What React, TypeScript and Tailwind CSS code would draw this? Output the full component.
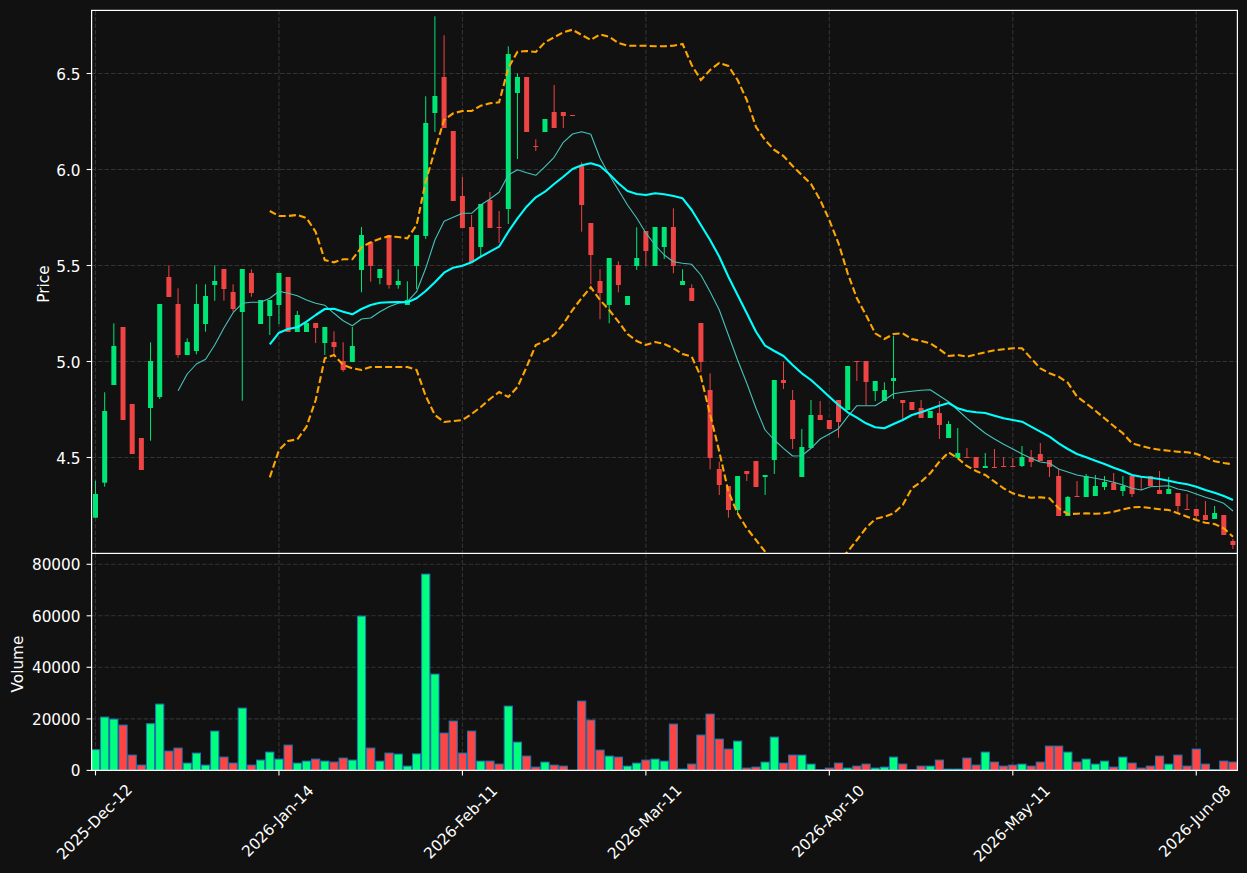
const X0 = 95.5;
const STEP = 9.173;
const xAt = (i: number) => X0 + i * STEP;
const L = 91.6;
const R = 1237.4;
const T = 10.4;
const MID = 553.4;
const B = 770.4;

const GREEN = "#00e676";
const RED = "#ef4444";

// dir, bodyTop, bodyBottom, wickTop, wickBottom (pixel rows of the plotted values)
type Candle = [number, number, number, number, number];
const candles: Candle[] = [
  [1,494,517.7,480.7,517.7],[1,411,482.7,392.3,486.7],[1,346,385,323.3,385],[0,327,420,327,420],[0,404,454,404,454],
  [0,438,470,438,470],[1,361,408,342.3,440.7],[1,304,397,304,399],[0,277,297,265.3,297],[0,304,355,288.3,357.7],
  [1,342,355,338.3,355],[1,304,351,284.3,354.3],[1,296,324,284.3,331.7],[1,281,285,265.3,300.7],[0,269,289,269,300.7],
  [0,292,309,284.3,311.7],[1,269,312,269,400.7],[0,273,293,269.3,296.7],[1,300,324,300,324],[1,300,316,300,335],
  [1,273,305,273,324],[0,277,332,277,332],[1,315,332,311,332],[1,323,332,323,332],[0,323,328,323,343],
  [1,327,343,327,355],[0,342,347,331.3,355],[0,361,370,342.3,371.7],[1,346,362,327,362],[1,235,270,227,292.3],
  [0,242,266,242,281.7],[1,269,278,269,284.3],[0,235,285,235,288.7],[1,281,285,269.3,288.7],[1,300,305,281.3,305],
  [1,235,266,235,289],[1,123,236,96.3,239],[1,96,113,16.3,132],[0,77,128,35.3,128],[0,131,201,131,201],
  [0,196,228,177,228],[0,227,262,215,262],[1,204,247,204,257],[0,200,228,192,228],[0,227,228,211,243],
  [1,54,209,46.3,224],[1,77,93,73.3,159],[0,77,132,77,132],[0,146,147,139.3,151],[1,119,132,119,132],
  [0,112,128,85,128],[0,112,116,112,128],[0,115,116,115,116],[0,166,205,162.3,231.7],[0,223,255,223,284.3],
  [0,281,293,269.3,319.3],[1,258,305,258,323.3],[0,265,285,261.3,292.3],[1,296,305,296,305],[1,258,266,227.3,270],
  [0,231,251,231,266],[1,227,266,227,266],[1,227,247,227,259],[0,227,266,208.3,273.3],[1,281,285,269.3,285],
  [0,288,301,284.3,301],[0,323,362,323,372],[0,390,458,373.3,469.3],[0,469,485,461.7,495],[0,486,510,486,517.7],
  [1,476,510,476,513],[0,471,474,471,481],[0,461,487,461,487],[1,475,477,475,495],[1,380,460,380,474],
  [0,380,383,361.7,389],[0,400,439,390,449],[1,447,477,429,477],[1,415,448,400,448],[0,415,420,401,420],
  [0,420,429,420,429],[0,400,422,400,437.7],[1,366,410,366,410],[0,361,362,361,381],[0,361,382,361,405],
  [1,381,391,381,401],[1,390,401,382.3,401],[1,378,381,336,399],[0,400,403,400,420],[0,402,410,402,410],
  [0,408,418,400,418],[1,411,418,411,418],[0,413,425,401,439],[1,424,438,421,438],[1,453,458,428,458],
  [0,457,458,448,458],[0,457,468,457,468],[1,466,468,453,468],[0,467,468,449,468],[0,466,467,457,467],
  [0,466,467,458,467],[1,457,466,446,467],[0,457,462,450,467],[0,454,461,443,461],[0,460,467,460,477],
  [0,476,516,469,516],[1,497,516,496,516],[0,496,497,481,497],[1,476,497,474,497],[1,486,496,475,496],
  [1,482,487,476,490],[0,483,490,473,490],[1,486,491,476,496],[0,476,494,476,497],[0,476,477,476,490],
  [0,476,486,476,486],[0,490,494,471,494],[1,489,494,477,494],[0,493,506,493,513],[0,509,510,494,510],
  [0,509,516,509,520],[0,515,520,501,520],[1,513,519,506,519],[0,515,535,515,535],[0,541,545,539,549],
];

const volumes = [
  20.7,53.3,51.3,45.3,15.3,5.3,46.7,66.3,19.3,22.3,7.3,17.3,5.3,39.3,13.3,7.3,62.3,5.3,10.3,18.3,
  11.3,25.3,7.3,9.3,11.3,9.3,8.3,12.3,10.3,154.3,22.3,9.3,17.3,16.3,4.3,16.5,196.3,96.3,37.3,49.3,
  17.3,39.3,9.3,9.3,6.3,64.3,28.3,14.3,3.3,8.3,5.3,4.3,0,69.3,50.3,20.3,14.3,13.3,4.3,7.3,
  10.3,11.3,9.3,46.3,1.3,6.3,35.3,56.3,31.3,21.3,29.3,2.3,3.3,8.3,33.3,7.3,15.3,15.3,6.3,0.7,
  2.3,7.3,2.3,4.3,6.3,2.3,3.3,13.3,6.3,0.7,4.3,4.3,10.3,1.3,1.3,12.3,5.3,18.3,8.3,4.3,
  5.3,6.3,4.3,8.3,24.3,24.3,18.3,8.3,11.3,6.3,9.3,3.3,13.3,7.3,2.3,4.3,14.3,6.3,15.3,4.3,
  21.3,6.3,0.7,9.3,8.3,
];

const teal = [
  390.7,374,364,359.3,345,328,312.7,303.3,302.3,302.3,298.3,291.3,293.3,295.7,300,303.3,305.3,313.3,320.7,325.7,
  319,318,311.7,306.7,303.3,301.7,291.7,268.3,240,221.3,217.3,213.3,213.3,205,199,192.3,175,169.7,172.7,175.3,
  166.7,157.3,142.3,134,131.7,134.3,158,175,190,205,218,233,245,255,261.7,263.3,264.3,275,291.7,310,
  335,360,383.3,408.3,430,440,448.3,456,455.7,448.3,439,434,428.7,416.7,405.7,405.7,405.7,400,393.7,392.3,
  391.3,390.3,389.7,395.7,401.7,410,418.3,426,433.3,439,444.3,449,454,458.3,462,463.3,469,472,475,476.7,
  478.3,480,482.3,485,488.3,490,486.7,486.3,485.7,489,490.7,494,497.3,500,503.3,511,
];
const cyan = [
  344.3,332.7,329,327.3,321.7,315,309,308.7,311.7,314.3,309,305,302.7,302.3,302,302.3,298.3,291,282.3,272.7,
  267.7,265.7,262.3,256.7,251.7,246.7,231.7,218.3,206.7,197.3,191.7,184,176.7,169,165.3,163.3,166,174,183.3,191,
  194,195,193.3,194.3,196,198.3,210,225,240,256.7,276.7,295,313.3,331.7,345.7,351,356,365,373.3,380,
  388.3,396.7,405,412.3,417.7,423.3,427.3,428.3,424,420,415,412.3,409,405.7,403,408.3,411,412.3,413,415.7,
  418.3,420,421.7,426.7,431.7,436.7,443.3,449,454,457.3,460.7,464,467.7,471,475,476.7,477.7,479,480.7,482.7,
  484.3,486.7,490,492.7,496,500,
];
const upper = [
  211,216,216,215,218,232,260,262.3,259.3,259.3,247.3,242.3,238.7,236.3,237,238.3,225,181.7,150,120,
  113.3,111,111,105.7,103.3,102.3,68,51.7,51,52,42.3,37.3,32.3,29.7,35,40,34.3,36.7,43,45.7,
  45.7,45.7,46.3,46.3,45.7,44,65,80,70,63,66,80,100,127,140,150,156,166,175,184,
  200,220,243.3,273.3,298.3,315,333.3,339,334,333.3,339,341,343.3,349.3,356,355,356.7,354.3,352.3,350.3,
  349.3,348.3,348.3,358.3,368.3,373.3,376.7,382.7,396.7,403.3,410.7,418.3,426,433.3,443.3,446,448.3,449.7,450.7,451.7,
  452.3,453.7,457.3,461.3,463,464.3,
];
const lower = [
  477.3,450,441,439.3,426.7,400,358.3,355,365,368.3,370,367,367,367,367,367,370,396,415,422,421,
  420,414,407,399,392,397,387,367,345,341,335,324,310,298,287.3,300,310,321.7,334,341,
  345,342,344,348.3,354,356.7,376.7,414.3,451.7,491.7,513.3,528.3,540,551.7,562,572,580,586,588,584,
  575,560,551.7,540,528,519,516.7,513.3,505,488.3,481.7,473.3,461.7,452.3,458.3,466,471,475,481.7,488.3,
  493.3,496,497.7,497.3,498.3,508.3,514,513.7,513.3,513.7,513.3,511.7,509.3,507.3,507,508,509.3,510,513.3,516.7,
  520,522.7,524,528.3,536.7,
];

const pts = (ys: number[], start: number) =>
  ys.map((y, k) => `${xAt(start + k).toFixed(1)},${y}`).join(" ");

const xTicks = [
  { i: 0, label: "2025-Dec-12", cx: 94.2, cy: 821.7 },
  { i: 20, label: "2026-Jan-14", cx: 277.5, cy: 820.8 },
  { i: 40, label: "2026-Feb-11", cx: 460.5, cy: 821.7 },
  { i: 60, label: "2026-Mar-11", cx: 644.5, cy: 821.7 },
  { i: 80, label: "2026-Apr-10", cx: 828, cy: 821 },
  { i: 100, label: "2026-May-11", cx: 1011.7, cy: 823.3 },
  { i: 120, label: "2026-Jun-08", cx: 1194.5, cy: 820.8 },
];
const priceTicks = [
  { y: 73.5, label: "6.5" },
  { y: 169.5, label: "6.0" },
  { y: 265.5, label: "5.5" },
  { y: 361.5, label: "5.0" },
  { y: 457.5, label: "4.5" },
];
const volTicks = [
  { y: 564.3, label: "80000" },
  { y: 615.8, label: "60000" },
  { y: 667.3, label: "40000" },
  { y: 718.9, label: "20000" },
  { y: 770.4, label: "0" },
];

const GRID = "#333333";
const DASH = "4.5 2";
const tickText = "fill-white text-[15.28px]";

function VGrid({ y1, y2 }: { y1: number; y2: number }) {
  return (
    <>
      {xTicks.map((t) => (
        <line key={t.i} x1={xAt(t.i)} x2={xAt(t.i)} y1={y1} y2={y2} stroke={GRID} strokeWidth={1.1} strokeDasharray={DASH} />
      ))}
    </>
  );
}

function YAxis({ ticks }: { ticks: { y: number; label: string }[] }) {
  return (
    <>
      {ticks.map((t) => (
        <g key={t.label}>
          <line x1={L - 5} x2={L} y1={t.y} y2={t.y} stroke="#ffffff" strokeWidth={1.1} />
          <text x={80.5} y={t.y + 6} textAnchor="end" className={tickText}>
            {t.label}
          </text>
        </g>
      ))}
    </>
  );
}

export default function App() {
  return (
    <div className="flex h-[873px] w-[1247px] flex-col overflow-hidden bg-[#111111] font-['DejaVu_Sans',sans-serif]">
      {/* price panel */}
      <svg className="block shrink-0" width={1247} height={554} viewBox="0 0 1247 554">
        <defs>
          <clipPath id="priceClip">
            <rect x={L} y={T} width={R - L} height={MID - T} />
          </clipPath>
        </defs>
        <VGrid y1={T} y2={MID} />
        {priceTicks.map((t) => (
          <line key={t.label} x1={L} x2={R} y1={t.y} y2={t.y} stroke={GRID} strokeWidth={1.1} strokeDasharray={DASH} />
        ))}
        <g clipPath="url(#priceClip)">
          {candles.map(([d, top, bot, wt, wb], i) => {
            const c = d ? GREEN : RED;
            return (
              <g key={i}>
                <line x1={xAt(i)} x2={xAt(i)} y1={wt} y2={wb} stroke={c} strokeWidth={1} />
                <rect x={xAt(i) - 2.5} y={top} width={5} height={Math.max(bot - top, 1)} fill={c} />
              </g>
            );
          })}
          <polyline points={pts(teal, 9)} fill="none" stroke="#45c4b8" strokeWidth={1.1} strokeLinejoin="round" />
          <polyline points={pts(cyan, 19)} fill="none" stroke="#00ffff" strokeWidth={2.1} strokeLinejoin="round" />
          <polyline points={pts(upper, 19)} fill="none" stroke="#ffa500" strokeWidth={2.1} strokeDasharray="7 3.2" />
          <polyline points={pts(lower, 19)} fill="none" stroke="#ffa500" strokeWidth={2.1} strokeDasharray="7 3.2" />
        </g>
        <YAxis ticks={priceTicks} />
        <rect x={L} y={T} width={R - L} height={MID - T} fill="none" stroke="#ffffff" strokeWidth={1.2} />
        <text x={0} y={0} transform="translate(48.5 284) rotate(-90)" textAnchor="middle" className={tickText}>
          Price
        </text>
      </svg>

      {/* volume panel and date axis */}
      <svg className="block shrink-0" width={1247} height={319} viewBox="0 554 1247 319">
        <defs>
          <clipPath id="volClip">
            <rect x={L} y={MID} width={R - L} height={B - MID} />
          </clipPath>
        </defs>
        <VGrid y1={MID} y2={B} />
        {volTicks.slice(0, 4).map((t) => (
          <line key={t.label} x1={L} x2={R} y1={t.y} y2={t.y} stroke={GRID} strokeWidth={1.1} strokeDasharray={DASH} />
        ))}
        <g clipPath="url(#volClip)">
          {volumes.map((h, i) => (
            <rect
              key={i}
              x={xAt(i) - 4.1}
              y={B - h}
              width={8.2}
              height={h}
              fill={candles[i][0] ? "#00ff7f" : "#ff4444"}
              stroke="#1f77b4"
              strokeWidth={1}
            />
          ))}
        </g>
        <YAxis ticks={volTicks} />
        <path d={`M${L} ${MID}V${B}H${R}V${MID}`} fill="none" stroke="#ffffff" strokeWidth={1.2} />
        {xTicks.map((t) => (
          <g key={t.i}>
            <line x1={xAt(t.i)} x2={xAt(t.i)} y1={B} y2={B + 5} stroke="#ffffff" strokeWidth={1.1} />
            <text
              x={0}
              y={5.5}
              transform={`translate(${t.cx} ${t.cy}) rotate(-45)`}
              textAnchor="middle"
              className={tickText}
            >
              {t.label}
            </text>
          </g>
        ))}
        <text x={0} y={0} transform="translate(22.5 664) rotate(-90)" textAnchor="middle" className={tickText}>
          Volume
        </text>
      </svg>
    </div>
  );
}
